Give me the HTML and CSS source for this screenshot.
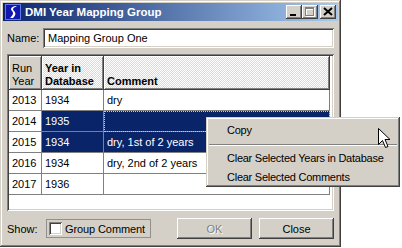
FILE: index.html
```html
<!DOCTYPE html>
<html lang="en">
<head>
  <meta charset="UTF-8">
  <meta name="viewport" content="width=device-width, initial-scale=1.0">
  <title>DMI Year Mapping Group</title>
  <link rel="stylesheet" href="styles.css">
</head>
<body>

<div class="window">
  <div class="title-bar">
    <svg class="app-icon" width="16" height="16" viewBox="0 0 16 16">
      <rect x="0" y="0" width="16" height="16" fill="#6078e8"/>
      <rect x="1" y="1" width="14" height="14" fill="#1018b0"/>
      <path d="M10 2 C6 3 5 5 7 7 C9 9 8 11 5 14 L8 14 C11 11 11 9 9 7 C7 5 8 4 12 2 Z" fill="#fff"/>
    </svg>
    <span class="title">DMI Year Mapping Group</span>
    <div class="title-buttons">
      <div class="tbtn">
        <svg width="16" height="14" viewBox="0 0 16 14"><rect x="4" y="9" width="6" height="2" fill="#000"/></svg>
      </div>
      <div class="tbtn">
        <svg width="16" height="14" viewBox="0 0 16 14">
          <path d="M4 3h9v9h-9z M5 5h7v6h-7z" fill="#fff" fill-rule="evenodd"/>
          <path d="M3 2h9v9h-9z M4 4h7v6h-7z" fill="#808080" fill-rule="evenodd"/>
        </svg>
      </div>
      <div class="tbtn close">
        <svg width="16" height="14" viewBox="0 0 16 14"><path d="M4 3l8 7M12 3l-8 7" stroke="#000" stroke-width="2"/></svg>
      </div>
    </div>
  </div>

  <div class="content">
    <div class="name-row">
      <span class="label">Name:</span>
      <div class="field">Mapping Group One</div>
    </div>

    <div class="grid-frame">
      <div class="grid">
        <div class="head plain">Run<br>Year</div>
        <div class="head bold">Year in<br>Database</div>
        <div class="head bold">Comment</div>

        <div class="cell">2013</div>
        <div class="cell">1934</div>
        <div class="cell">dry</div>

        <div class="cell">2014</div>
        <div class="cell sel">1935</div>
        <div class="cell sel focus"></div>

        <div class="cell">2015</div>
        <div class="cell sel">1934</div>
        <div class="cell sel">dry, 1st of 2 years</div>

        <div class="cell">2016</div>
        <div class="cell">1934</div>
        <div class="cell">dry, 2nd of 2 years</div>

        <div class="cell">2017</div>
        <div class="cell">1936</div>
        <div class="cell"></div>
      </div>
    </div>

    <div class="bottom-row">
      <span class="label">Show:</span>
      <label class="check-group">
        <span class="checkbox"></span>
        Group Comment
      </label>
      <div class="buttons">
        <button class="btn" disabled>OK</button>
        <button class="btn">Close</button>
      </div>
    </div>
  </div>
</div>

<div class="popup">
  <div class="item">Copy</div>
  <div class="separator"></div>
  <div class="item">Clear Selected Years in Database</div>
  <div class="item">Clear Selected Comments</div>
</div>

<svg class="cursor" width="13" height="21" viewBox="0 0 13 21">
  <path d="M0.5 0.5 L0.5 16.5 L4.5 12.5 L7.5 19.5 L10 18.5 L7 11.5 L12 11.5 Z" fill="#fff" stroke="#000" stroke-width="1"/>
</svg>

</body>
</html>
```

FILE: styles.css
```css
body {
  margin: 0;
  background: #fff;
  font-family: "Liberation Sans", Arial, sans-serif;
  font-size: 11px;
  color: #000;
  position: relative;
  width: 402px;
  height: 248px;
  overflow: hidden;
}
.window {
  width: 341px;
  height: 247px;
  box-sizing: border-box;
  padding: 3px;
  background: #d4d0c8;
  box-shadow: inset -1px -1px #404040, inset 1px 1px #d4d0c8,
              inset -2px -2px #808080, inset 2px 2px #fff;
  display: flex;
  flex-direction: column;
}
.title-bar {
  height: 18px;
  background: linear-gradient(to right, #0a246a, #a6caf0);
  display: flex;
  align-items: center;
  padding-left: 2px;
}
.app-icon {
  margin-right: 4px;
}
.title {
  color: #fff;
  font-weight: bold;
  font-size: 11.5px;
  flex: 1;
}
.title-buttons {
  display: flex;
  margin-right: 2px;
}
.tbtn {
  width: 16px;
  height: 14px;
  background: #d4d0c8;
  box-shadow: inset -1px -1px #404040, inset 1px 1px #fff,
              inset -2px -2px #808080;
}
.tbtn svg {
  display: block;
}
.tbtn.close {
  margin-left: 2px;
}
.content {
  padding: 0 4px;
  display: flex;
  flex-direction: column;
}
.name-row {
  margin-top: 7px;
  display: flex;
  align-items: center;
}
.name-row .label {
  width: 36px;
}
.field {
  flex: 1;
  height: 20px;
  box-sizing: border-box;
  background: #fff;
  padding: 0 5px;
  line-height: 20px;
  box-shadow: inset 1px 1px #808080, inset -1px -1px #fff,
              inset 2px 2px #404040, inset -2px -2px #d4d0c8;
}
.grid-frame {
  margin-top: 6px;
  height: 157px;
  box-sizing: border-box;
  padding: 2px;
  background: #fff;
  box-shadow: inset 1px 1px #808080, inset -1px -1px #fff,
              inset 2px 2px #404040, inset -2px -2px #d4d0c8;
}
.grid {
  display: grid;
  grid-template-columns: 33px 62px 226px;
  grid-template-rows: 34px repeat(5, 21px);
}
.head {
  display: flex;
  align-items: flex-end;
  padding: 0 3px 2px;
  line-height: 13px;
  background: repeating-conic-gradient(#dcd9d2 0 25%, #fff 0 50%) 0 0 / 2px 2px;
  box-shadow: inset -1px -1px #404040, inset 1px 1px #fff,
              inset -2px -2px #808080;
}
.head.plain {
  background: #d4d0c8;
}
.head.bold {
  font-weight: bold;
}
.cell {
  padding: 0 3px;
  line-height: 20px;
  border-right: 1px solid #808080;
  border-bottom: 1px solid #808080;
  background: #fff;
  white-space: nowrap;
  overflow: hidden;
}
.cell.sel {
  background: #0a246a;
  color: #fff;
}
.cell.focus {
  outline: 1px dotted #d8d088;
  outline-offset: -1px;
}
.bottom-row {
  margin-top: 7px;
  display: flex;
  align-items: center;
  height: 21px;
}
.bottom-row .label {
  width: 39px;
}
.check-group {
  display: flex;
  align-items: center;
  gap: 3px;
  height: 19px;
  padding: 0 5px 0 2px;
  border: 1px solid #909090;
  box-sizing: border-box;
  letter-spacing: -0.1px;
}
.checkbox {
  width: 13px;
  height: 13px;
  box-sizing: border-box;
  background: #fff;
  box-shadow: inset 1px 1px #808080, inset -1px -1px #fff,
              inset 2px 2px #404040, inset -2px -2px #d4d0c8;
}
.buttons {
  margin-left: auto;
  display: flex;
  gap: 7px;
}
.btn {
  width: 75px;
  height: 21px;
  font-family: inherit;
  font-size: 11px;
  color: #000;
  background: #d4d0c8;
  border: none;
  padding: 0;
  box-shadow: inset -1px -1px #404040, inset 1px 1px #fff,
              inset -2px -2px #808080;
}
.btn:disabled {
  color: #808080;
  text-shadow: 1px 1px #fff;
}
.popup {
  position: absolute;
  left: 206px;
  top: 117px;
  width: 194px;
  box-sizing: border-box;
  padding: 4px 2px 0;
  background: #d4d0c8;
  box-shadow: inset -1px -1px #404040, inset 1px 1px #d4d0c8,
              inset -2px -2px #808080, inset 2px 2px #fff;
}
.item {
  height: 19px;
  line-height: 19px;
  padding-left: 19px;
  white-space: nowrap;
  letter-spacing: -0.25px;
}
.separator {
  height: 9px;
  display: flex;
  flex-direction: column;
  justify-content: center;
  padding: 0 1px;
}
.separator::before {
  content: "";
  border-top: 1px solid #808080;
  border-bottom: 1px solid #fff;
}
.cursor {
  position: absolute;
  left: 378px;
  top: 128px;
}
```
